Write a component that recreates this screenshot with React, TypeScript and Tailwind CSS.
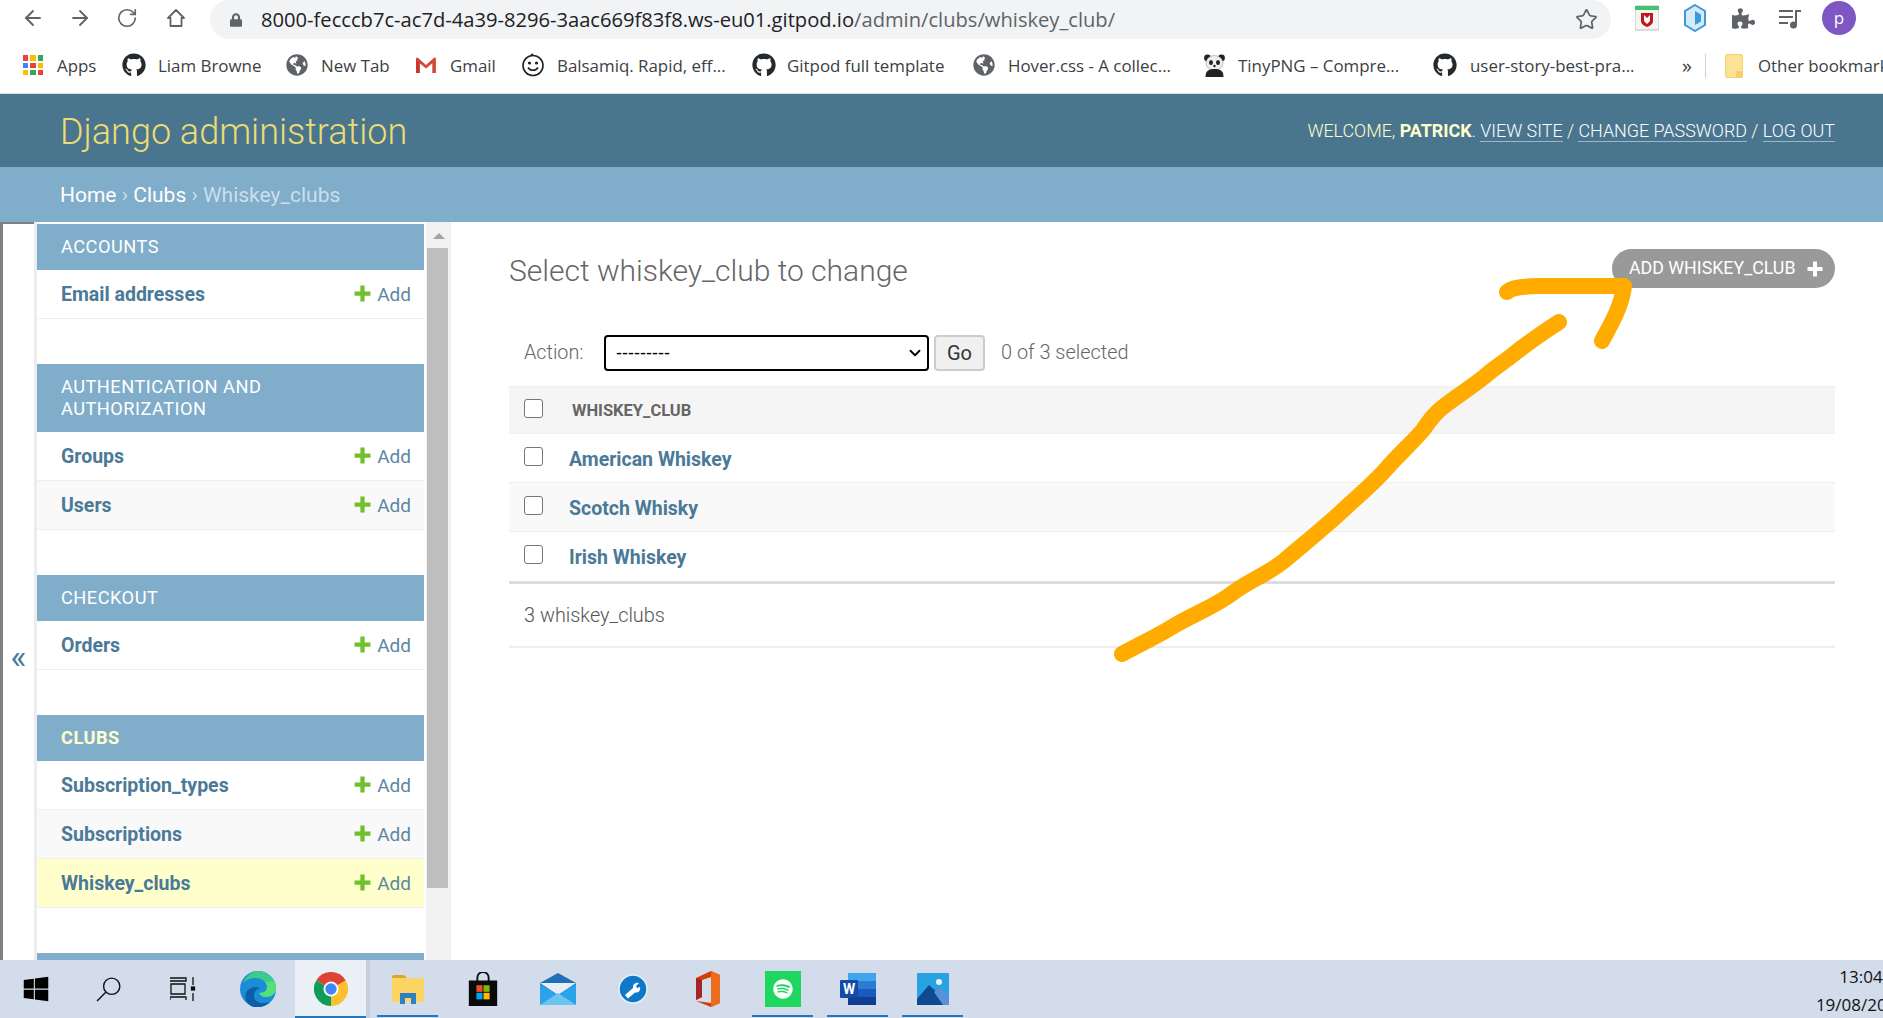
import React from "react";
import { ArrowLeft, ArrowRight, RotateCw, Star, ChevronDown } from "lucide-react";
import { FaGithub, FaGlobeAmericas, FaLock, FaPuzzlePiece, FaSpotify, FaWindows } from "react-icons/fa";

const roboto = "font-['Roboto',sans-serif]";

const PlusIcon = ({ className }: { className: string }) => (
  <svg viewBox="0 0 16 16" className={className} fill="currentColor">
    <path d="M6 0.500h4V6h5.500v4H10v5.500H6V10H0.500V6H6z" />
  </svg>
);

function Apps() {
  const c = ["#ea4335", "#fbbc04", "#34a853", "#4285f4", "#ea4335", "#fbbc04", "#fbbc04", "#34a853", "#ea4335"];
  return (
    <div className="grid grid-cols-3 gap-[2px] w-[20px] h-[20px]">
      {c.map((k, i) => (
        <span key={i} style={{ background: k }} />
      ))}
    </div>
  );
}
const Gmail = () => (
  <svg viewBox="0 0 24 20" className="w-[22px] h-[18px]">
    <path d="M1 2v17h4V8l7 6 7-6v11h4V2h-2l-9 8-9-8z" fill="#d44638" />
    <path d="M5 8v11H1V3z" fill="#c5392b" />
  </svg>
);
const Smile = () => (
  <svg viewBox="0 0 24 24" className="w-[24px] h-[24px]" fill="none" stroke="#222" strokeWidth="1.6">
    <circle cx="12" cy="12.500" r="10" />
    <circle cx="8.500" cy="10" r=".8" fill="#222" />
    <circle cx="15.500" cy="10" r=".8" fill="#222" />
    <path d="M7 14.500c2 3.600 8 3.600 10 0" />
    <path d="M10 2.500l2-1.500" />
  </svg>
);
const Panda = () => (
  <svg viewBox="0 0 24 24" className="w-[25px] h-[24px]">
    <circle cx="5" cy="5" r="3.400" fill="#222" />
    <circle cx="19" cy="5" r="3.400" fill="#222" />
    <ellipse cx="12" cy="10" rx="8.500" ry="7.500" fill="#eee" stroke="#888" strokeWidth=".5" />
    <ellipse cx="8.500" cy="9.500" rx="2" ry="2.600" fill="#222" />
    <ellipse cx="15.500" cy="9.500" rx="2" ry="2.600" fill="#222" />
    <circle cx="12" cy="13" r="1.200" fill="#222" />
    <path d="M3 24c0-7 4-8 9-8s9 1 9 8z" fill="#222" />
  </svg>
);
const Folder = () => (
  <svg viewBox="0 0 18 24" className="w-[18px] h-[24px] shrink-0">
    <rect x=".5" y=".5" width="17" height="23" rx="1.500" fill="#fde293" stroke="#f4d06f" />
    <path d="M11 24v-7h6.500v7z" fill="#f6cf6c" />
  </svg>
);
const Globe = () => <FaGlobeAmericas className="w-[22px] h-[22px] text-[#5f6368]" />;
const Git = () => <FaGithub className="w-[24px] h-[24px] text-[#24292e]" />;

const bookmarks: { w: number; icon: React.ReactNode; label: string; iw: number }[] = [
  { w: 99, icon: <Apps />, label: "Apps", iw: 34 },
  { w: 164, icon: <Git />, label: "Liam Browne", iw: 36 },
  { w: 129, icon: <Globe />, label: "New Tab", iw: 35 },
  { w: 106, icon: <Gmail />, label: "Gmail", iw: 35 },
  { w: 231, icon: <Smile />, label: "Balsamiq. Rapid, eff...", iw: 36 },
  { w: 221, icon: <Git />, label: "Gitpod full template", iw: 35 },
  { w: 229, icon: <Globe />, label: "Hover.css - A collec...", iw: 35 },
  { w: 231, icon: <Panda />, label: "TinyPNG – Compre...", iw: 36 },
  { w: 246, icon: <Git />, label: "user-story-best-pra...", iw: 37 },
];

const modules = [
  { title: ["ACCOUNTS"], rows: ["Email addresses"] },
  { title: ["AUTHENTICATION AND", "AUTHORIZATION"], rows: ["Groups", "Users"] },
  { title: ["CHECKOUT"], rows: ["Orders"] },
  { title: ["CLUBS"], rows: ["Subscription_types", "Subscriptions", "Whiskey_clubs"], active: true },
];

function ChromeBar() {
  return (
    <div className="bg-white h-[94px] border-b border-[#dcdcdc] shrink-0 font-['Open_Sans',sans-serif]">
      <div className="h-[46px] flex items-start text-[#5f6368]">
        <div className="flex items-center h-[36px] w-[210px] pl-[21px]">
          <ArrowLeft className="w-[24px] h-[24px] mr-[23px]" strokeWidth={1.8} />
          <ArrowRight className="w-[24px] h-[24px] mr-[24px]" strokeWidth={1.8} />
          <RotateCw className="w-[22px] h-[22px] mr-[26px]" strokeWidth={1.8} />
          <svg viewBox="0 0 24 24" className="w-[24px] h-[24px]" fill="none" stroke="currentColor" strokeWidth="1.8">
            <path d="M12 4L4 12h2.500v8h11v-8H20z" strokeLinejoin="round" />
          </svg>
        </div>
        <div className="w-[1401px] h-[39px] bg-[#f1f3f4] rounded-[20px] flex items-center pl-[20px] pr-[13px]">
          <FaLock className="w-[12px] h-[14px] text-[#5f6368] mr-[19px]" />
          <span className="text-[20.150px] whitespace-nowrap text-[#202124]">
            8000-fecccb7c-ac7d-4a39-8296-3aac669f83f8.ws-eu01.gitpod.io
            <span className="text-[#5f6368]">/admin/clubs/whiskey_club/</span>
          </span>
          <Star className="ml-auto w-[23px] h-[23px] text-[#5f6368]" strokeWidth={1.8} />
        </div>
        <div className="flex items-center h-[36px] pl-[24px]">
          <svg viewBox="0 0 24 24" className="w-[24px] h-[26px]">
            <rect x="0" y="0" width="24" height="24" rx="1" fill="#f5f5f5" stroke="#bbb" />
            <rect x="0" y="0" width="24" height="4" fill="#3fc46f" />
            <path d="M6 7h12v8c0 3-3 5-6 6-3-1-6-3-6-6z" fill="#c01818" />
            <path d="M9 9l3 3 3-3v6l-3 3-3-3z" fill="#fff" />
          </svg>
          <svg viewBox="0 0 24 28" className="w-[24px] h-[28px] ml-[24px]">
            <path d="M12 1l10 6v14l-10 6-10-6V7z" fill="#d5ebfa" stroke="#3b9ad9" strokeWidth="2" />
            <path d="M12 7l6 3.500v7L12 21z" fill="#3b9ad9" />
          </svg>
          <FaPuzzlePiece className="w-[23px] h-[23px] ml-[25px] text-[#5f6368]" />
          <svg viewBox="0 0 24 24" className="w-[24px] h-[24px] ml-[23px]" fill="#5f6368">
            <rect x="1" y="4" width="14" height="2" />
            <rect x="1" y="10" width="14" height="2" />
            <rect x="1" y="16" width="9" height="2" />
            <rect x="17" y="4" width="6" height="2" />
            <rect x="17" y="4" width="2" height="15" />
            <circle cx="15.500" cy="19" r="3.500" />
          </svg>
          <div className="w-[34px] h-[34px] ml-[20px] rounded-full bg-[#7e57c2] text-white flex items-center justify-center text-[17px]">
            p
          </div>
        </div>
      </div>
      <div className="h-[47px] flex items-center text-[16.900px] text-[#3c4043] pl-[23px] whitespace-nowrap overflow-hidden pb-[8px]">
        {bookmarks.map((b) => (
          <div key={b.label} className="flex items-center shrink-0" style={{ width: b.w }}>
            <div className="shrink-0 flex items-center" style={{ width: b.iw }}>
              {b.icon}
            </div>
            <span>{b.label}</span>
          </div>
        ))}
        <span className="ml-[3px] text-[20px] leading-none">»</span>
        <span className="w-px h-[24px] bg-[#d0d0d0] ml-[13px] mr-[19px] shrink-0" />
        <Folder />
        <span className="ml-[15px]">Other bookmarks</span>
      </div>
    </div>
  );
}

function DjangoHeader() {
  return (
    <div className={roboto}>
      <div className="h-[73px] bg-[#4a758f] flex items-center justify-between pl-[60px] pr-[48px] pt-[2px]">
        <div className="text-[36px] font-light text-[#ecdc72]">Django administration</div>
        <div className="text-[17.900px] font-light text-[#ffffcc] uppercase whitespace-nowrap">
          Welcome, <b className="font-bold">Patrick</b>.{" "}
          <span className="text-white border-b border-[#9bb7c8]">View site</span> /{" "}
          <span className="text-white border-b border-[#9bb7c8]">Change password</span> /{" "}
          <span className="text-white border-b border-[#9bb7c8]">Log out</span>
        </div>
      </div>
      <div className="h-[55px] bg-[#7fadca] flex items-center pl-[60px] pt-[2px] text-[21px] text-[#cbdfeb]">
        <span className="text-white">Home</span>
        <span>&nbsp;›&nbsp;</span>
        <span className="text-white">Clubs</span>
        <span>&nbsp;›&nbsp;</span>
        <span>Whiskey_clubs</span>
      </div>
    </div>
  );
}

function Sidebar() {
  return (
    <div className={`flex h-full shrink-0 ${roboto}`}>
      <div className="w-[3px] bg-[#808080]" />
      <div className="w-[31px] flex flex-col">
        <div className="h-[2px] bg-[#808080]" />
        <div className="pt-[415px] text-center text-[34px] leading-[34px] text-[#4a7a97]">«</div>
      </div>
      <div className="w-[3px] bg-[#ededed]" />
      <div className="w-[387px] pt-[2px] overflow-hidden">
        {modules.map((m) => (
          <div key={m.title[0]} className="mb-[45px]">
            <div
              className={`bg-[#7fadca] px-[24px] py-[12px] text-[18.200px] leading-[22px] tracking-[0.5px] ${
                m.active ? "text-[#ffffcc] font-bold" : "text-white"
              }`}
            >
              {m.title.map((t) => (
                <div key={t}>{t}</div>
              ))}
            </div>
            {m.rows.map((r, i) => (
              <div
                key={r}
                className={`h-[49px] border-b border-[#eeeeee] flex items-center justify-between pl-[24px] pr-[13px] pt-[2px] text-[19.500px] ${
                  r === "Whiskey_clubs" ? "bg-[#ffffcc]" : i % 2 === 1 ? "bg-[#f9f9f9]" : "bg-white"
                }`}
              >
                <span className="font-bold text-[#4a7a97]">{r}</span>
                <span className="flex items-center text-[19px] text-[#5b87a2]">
                  <PlusIcon className="w-[17px] h-[17px] text-[#70bf2b] mr-[6px] -mt-[3px]" />
                  Add
                </span>
              </div>
            ))}
          </div>
        ))}
        <div className="h-[7px] bg-[#7fadca]" />
      </div>
      <div className="w-[2px]" />
      <div className="w-[25px] bg-[#f1f1f1] relative">
        <div className="flex justify-center pt-[11px]">
          <span className="w-0 h-0 border-x-[6px] border-x-transparent border-b-[6px] border-b-[#a3a3a3]" />
        </div>
        <div className="mx-[1px] mt-[9px] h-[640px] w-[21px] bg-[#bfbfbf]" />
      </div>
    </div>
  );
}

const Check = ({ up }: { up?: boolean }) => (
  <input
    type="checkbox"
    className={`appearance-none w-[19px] h-[19px] bg-white border border-[#767676] rounded-[3px] shrink-0 ${
      up ? "-mt-[5px]" : "-mt-[3px]"
    }`}
  />
);

function Row({ label, alt, last }: { label: string; alt?: boolean; last?: boolean }) {
  return (
    <div
      className={`flex items-center pl-[15px] ${
        last ? "h-[52px] border-b-[3px] border-[#dddddd]" : "h-[49px] border-b border-[#eeeeee]"
      } ${alt ? "bg-[#f9f9f9]" : "bg-white"}`}
    >
      <Check up={last} />
      <a className={`ml-[26px] text-[19.500px] font-bold text-[#4a7a97] ${last ? "pt-[2px]" : "pt-[4px]"}`}>{label}</a>
    </div>
  );
}

function Main() {
  return (
    <div className={`flex-1 pl-[58px] pr-[48px] pt-[27px] bg-white ${roboto}`}>
      <div className="flex items-start justify-between h-[86px]">
        <h1 className="text-[30px] leading-[44px] font-light text-[#666666]">Select whiskey_club to change</h1>
        <div className="h-[39px] w-[223px] rounded-[20px] bg-[#999999] text-white text-[17.800px] flex items-center pl-[17px] pr-[12px] justify-between">
          <span>ADD WHISKEY_CLUB</span>
          <PlusIcon className="w-[16px] h-[16px]" />
        </div>
      </div>
      <div className="h-[51px] flex items-start pl-[15px]">
        <span className="text-[19.800px] font-light text-[#666666] leading-[36px] w-[80px]">Action:</span>
        <div className="relative w-[325px] h-[36px]">
          <select className="appearance-none w-full h-full border-[2px] border-black rounded-[4px] bg-white text-[18px] font-['Liberation_Sans',sans-serif] text-black pl-[10px]">
            <option>---------</option>
          </select>
          <ChevronDown className="absolute right-[5px] top-[9px] w-[18px] h-[18px] text-black pointer-events-none" strokeWidth={2.5} />
        </div>
        <button className="ml-[5px] w-[51px] h-[36px] border-2 border-[#cccccc] rounded-[4px] bg-[#f0f0f0] text-[20px] text-[#333333]">
          Go
        </button>
        <span className="ml-[16px] text-[19.900px] font-light leading-[36px] text-[#666666]">0 of 3 selected</span>
      </div>
      <div className="h-[48px] bg-[#f5f5f5] border-y border-[#eeeeee] flex items-center pl-[15px]">
        <Check />
        <span className="ml-[29px] pt-[2px] text-[16.500px] font-bold text-[#666666]">WHISKEY_CLUB</span>
      </div>
      <Row label="American Whiskey" />
      <Row label="Scotch Whisky" alt />
      <Row label="Irish Whiskey" last />
      <div className="h-[64px] border-b-[2px] border-[#eeeeee] flex items-center pl-[15px] pt-[2px] text-[19.900px] font-light text-[#555555]">
        3 whiskey_clubs
      </div>
    </div>
  );
}

const underlined = ["explorer", "spotify", "word", "photos"];
const icons: { k: string; el: React.ReactNode; w: number }[] = [
  { k: "win", w: 72, el: <FaWindows className="w-[28px] h-[28px] text-black" /> },
  {
    k: "search",
    w: 73,
    el: (
      <svg viewBox="0 0 24 24" className="w-[26px] h-[26px]" fill="none" stroke="#111" strokeWidth="1.300">
        <circle cx="14.500" cy="9.500" r="7.500" />
        <path d="M9 15l-8 8" />
      </svg>
    ),
  },
  {
    k: "task",
    w: 75,
    el: (
      <svg viewBox="0 0 26 24" className="w-[26px] h-[24px]" fill="none" stroke="#111" strokeWidth="1.300">
        <path d="M0 1h16v3H0M1 7h14v10H1zM0 23v-3h16v3M23 0v8M23 16v8" />
        <rect x="21.500" y="10" width="3" height="3" fill="#111" />
      </svg>
    ),
  },
  {
    k: "edge",
    w: 75,
    el: (
      <svg viewBox="0 0 36 36" className="w-[36px] h-[36px]">
        <circle cx="18" cy="18" r="18" fill="#1b8dd6" />
        <path d="M3 12C6 4 13 0 18 0c10 0 18 8 18 17 0 6-5 9-10 9-4 0-6-2-7-4 6 0 8-3 8-6 0-5-5-9-11-9S6 9 3 12z" fill="#3ccb8c" />
        <path d="M14 36C7 34 3 27 7 20c3-4 9-5 13-3-4 1-6 4-6 8 0 5 6 9 16 6-4 4-10 6-16 5z" fill="#0c5ea8" />
        <path d="M36 17c0 6-5 9-10 9-4 0-6-2-7-4 6 0 8-3 8-6 0-2-1-4-2-5l9-1c1 2 2 4 2 7z" fill="#55e07f" />
      </svg>
    ),
  },
  {
    k: "chrome",
    w: 75,
    el: (
      <svg viewBox="0 0 36 36" className="w-[34px] h-[34px]">
        <path d="M18 18L2.400 9A18 18 0 0 1 33.600 9z" fill="#db4437" />
        <path d="M18 18L33.600 9A18 18 0 0 1 18 36z" fill="#fbc02d" />
        <path d="M18 18L18 36A18 18 0 0 1 2.400 9z" fill="#0f9d58" />
        <circle cx="18" cy="18" r="8" fill="#fff" />
        <circle cx="18" cy="18" r="6" fill="#4285f4" />
      </svg>
    ),
  },
  {
    k: "explorer",
    w: 75,
    el: (
      <svg viewBox="0 0 32 30" className="w-[32px] h-[30px]">
        <path d="M0 3a2 2 0 0 1 2-2h10l3 3H0z" fill="#e0a526" />
        <rect x="0" y="4" width="32" height="24" rx="2" fill="#fbd563" />
        <path d="M8 30V19h16v11h-5v-6h-6v6z" fill="#2f7fc4" />
      </svg>
    ),
  },
  {
    k: "store",
    w: 75,
    el: (
      <svg viewBox="0 0 30 36" className="w-[30px] h-[34px]">
        <path d="M9 10V6a6 6 0 0 1 12 0v4" fill="none" stroke="#111" strokeWidth="2" />
        <rect x="0" y="9" width="30" height="27" fill="#0a0a0a" />
        <rect x="8" y="14" width="6.500" height="7" fill="#f25022" />
        <rect x="15.500" y="14" width="6.500" height="7" fill="#7fba00" />
        <rect x="8" y="22" width="6.500" height="7" fill="#00a4ef" />
        <rect x="15.500" y="22" width="6.500" height="7" fill="#ffb900" />
      </svg>
    ),
  },
  {
    k: "mail",
    w: 75,
    el: (
      <svg viewBox="0 0 36 32" className="w-[36px] h-[32px]">
        <path d="M0 10L18 0l18 10v22H0z" fill="#1f6fb8" />
        <path d="M0 10h36L18 22z" fill="#e6eef6" />
        <path d="M0 11l18 11 18-11v21H0z" fill="#2aa4e8" />
        <path d="M0 32l18-12 18 12z" fill="#6cc4f0" />
      </svg>
    ),
  },
  {
    k: "wrench",
    w: 75,
    el: (
      <svg viewBox="0 0 30 30" className="w-[30px] h-[30px]">
        <circle cx="15" cy="15" r="14" fill="#0f78c8" stroke="#e6f2fb" strokeWidth="1.500" />
        <path d="M7 21l8-7c-.5-3 2-6 6-5l-3 3 1 2 3-1c1 4-2 6-5 5.500l-7 6z" fill="#fff" />
      </svg>
    ),
  },
  {
    k: "office",
    w: 75,
    el: (
      <svg viewBox="0 0 28 36" className="w-[28px] h-[36px]">
        <path d="M2 7l15-7 9 4v28l-9 4-15-6 15 2V6L8 9v17l-6 3z" fill="#d83b01" />
        <path d="M17 0l9 4v28l-9 4z" fill="#eb6c1d" />
        <path d="M2 7l6 2v17l-6 3z" fill="#a4262c" />
      </svg>
    ),
  },
  {
    k: "spotify",
    w: 75,
    el: (
      <div className="w-[36px] h-[36px] bg-[#1ed760] flex items-center justify-center">
        <FaSpotify className="w-[20px] h-[20px] text-white" />
      </div>
    ),
  },
  {
    k: "word",
    w: 75,
    el: (
      <svg viewBox="0 0 36 32" className="w-[36px] h-[32px]">
        <rect x="8" y="0" width="28" height="8" fill="#41a5ee" />
        <rect x="8" y="8" width="28" height="8" fill="#2b7cd3" />
        <rect x="8" y="16" width="28" height="8" fill="#185abd" />
        <rect x="8" y="24" width="28" height="8" fill="#103f91" />
        <rect x="0" y="7" width="18" height="18" rx="1" fill="#144aa8" />
        <text x="9" y="21" textAnchor="middle" fontSize="14" fontFamily="Roboto" fontWeight="700" fill="#fff">W</text>
      </svg>
    ),
  },
  {
    k: "photos",
    w: 75,
    el: (
      <svg viewBox="0 0 32 32" className="w-[32px] h-[32px]">
        <rect width="32" height="32" rx="1" fill="#27a3e4" />
        <circle cx="22" cy="9" r="3" fill="#e8f5fc" />
        <path d="M0 26l12-14 20 18v2H0z" fill="#0f4a8f" />
        <path d="M17 19l6-5 9 8v10H26z" fill="#5a8fdc" />
      </svg>
    ),
  },
];

function Taskbar() {
  return (
    <div className="h-[58px] shrink-0 bg-[#d3dcea] flex items-stretch font-['Open_Sans',sans-serif]">
      {icons.map((i) => (
        <div
          key={i.k}
          style={{ width: i.w }}
          className={`flex items-center justify-center shrink-0 pb-[1px] ${
            i.k === "chrome" ? "bg-[#ebf0f7] border-r-[4px] border-[#c5cfdd]" : ""
          }`}
        >
          <div className="relative h-full w-full flex items-center justify-center">
            {i.el}
            {underlined.includes(i.k) && (
              <span className="absolute bottom-0 left-[7px] right-[7px] h-[2px] bg-[#1f78c1]" />
            )}
            {i.k === "chrome" && <span className="absolute -bottom-[1px] left-0 right-0 h-[2px] bg-[#1f78c1]" />}
          </div>
        </div>
      ))}
      <div className="ml-auto -mr-[28px] w-[100px] shrink-0 text-center text-[17px] leading-[28px] text-[#111] pt-[3px] whitespace-nowrap">
        <div>13:04</div>
        <div>19/08/2021</div>
      </div>
    </div>
  );
}

function Arrow() {
  return (
    <svg className="absolute left-0 top-0 pointer-events-none" width="1883" height="1018" fill="none" stroke="#ffab00" strokeWidth="16" strokeLinecap="round" strokeLinejoin="round">
      <path d="M1122 654C1140 644 1156 637 1172 627C1195 613 1215 607 1234 592C1252 579 1270 573 1285 560C1305 543 1325 527 1341 512C1357 497 1373 484 1387 468C1401 452 1413 442 1423 430C1430 420 1434 414 1443 407C1456 397 1470 388 1484 377C1493 369 1501 364 1510 357C1525 345 1542 333 1559 322" />
      <path d="M1507 292C1512 287 1522 287 1536 286L1624 286C1622 306 1610 326 1602 341" />
    </svg>
  );
}

export default function App() {
  return (
    <div className="relative w-[1883px] h-[1018px] overflow-hidden flex flex-col bg-white">
      <ChromeBar />
      <DjangoHeader />
      <div className="flex flex-1 min-h-0 overflow-hidden">
        <Sidebar />
        <Main />
      </div>
      <Taskbar />
      <Arrow />
    </div>
  );
}
